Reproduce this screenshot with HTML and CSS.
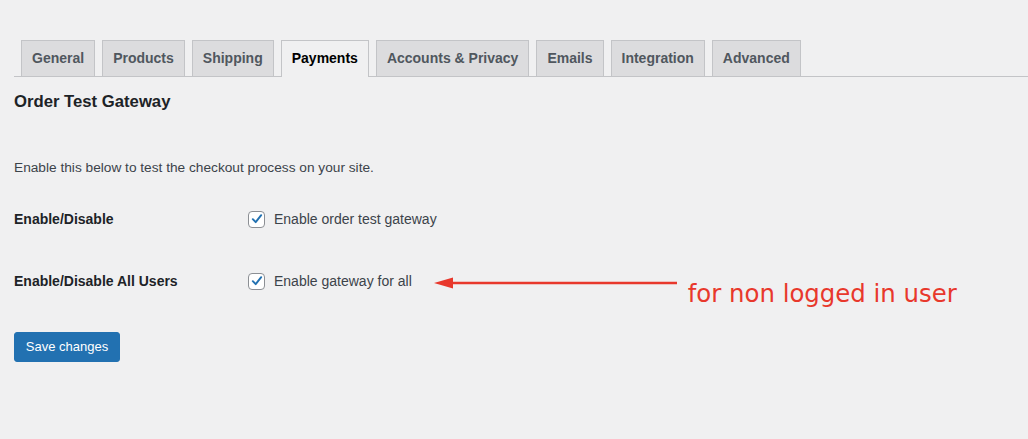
FILE: index.html
```html
<!DOCTYPE html>
<html>
<head>
<meta charset="utf-8">
<link rel="stylesheet" href="styles.css">
</head>
<body>
<div class="wrap">
  <nav class="tabs">
    <span class="tab">General</span>
    <span class="tab">Products</span>
    <span class="tab">Shipping</span>
    <span class="tab active">Payments</span>
    <span class="tab">Accounts &amp; Privacy</span>
    <span class="tab">Emails</span>
    <span class="tab">Integration</span>
    <span class="tab">Advanced</span>
  </nav>
  <h2 class="title">Order Test Gateway</h2>
  <p class="desc">Enable this below to test the checkout process on your site.</p>
  <div class="form">
    <div class="row">
      <div class="th">Enable/Disable</div>
      <label class="td"><span class="cb"><svg viewBox="0 0 16 16" width="16" height="16"><path d="M3.2 8.2 L6.5 11.6 L12.8 3.6" fill="none" stroke="#2271b1" stroke-width="2.2" stroke-linecap="round" stroke-linejoin="round"/></svg></span>Enable order test gateway</label>
    </div>
    <div class="row">
      <div class="th">Enable/Disable All Users</div>
      <label class="td"><span class="cb"><svg viewBox="0 0 16 16" width="16" height="16"><path d="M3.2 8.2 L6.5 11.6 L12.8 3.6" fill="none" stroke="#2271b1" stroke-width="2.2" stroke-linecap="round" stroke-linejoin="round"/></svg></span>Enable gateway for all</label>
      <div class="note">
        <svg class="arrow" width="246" height="12" viewBox="0 0 246 12"><path d="M18 4.8 H243 V7.2 H18 Z" fill="#e8382c"/><path d="M0 6 L19 0.5 L19 11.5 Z" fill="#e8382c"/></svg>
        <span class="note-text">for non logged in user</span>
      </div>
    </div>
  </div>
  <button class="save">Save changes</button>
</div>
</body>
</html>
```
FILE: styles.css
```css
html, body {
  margin: 0;
  padding: 0;
  background: #f0f0f1;
  height: 100%;
}
body {
  font-family: "Liberation Sans", Arial, sans-serif;
  color: #3c434a;
}
.wrap {
  padding: 40px 0 0 14px;
}
.tabs {
  display: flex;
  gap: 7px;
  padding-left: 7px;
  border-bottom: 1px solid #c3c4c7;
  height: 36px;
  align-items: flex-end;
}
.tab {
  box-sizing: border-box;
  height: 36px;
  padding: 0 10px;
  border: 1px solid #c3c4c7;
  border-bottom: none;
  background: #dcdcde;
  color: #50575e;
  font-size: 14px;
  font-weight: 600;
  line-height: 35px;
  white-space: nowrap;
}
.tab.active {
  background: #f0f0f1;
  color: #000;
  height: 37px;
  margin-bottom: -1px;
}
.title {
  margin: 15px 0 0;
  font-size: 16.7px;
  line-height: 20px;
  font-weight: 600;
  color: #1d2327;
}
.desc {
  margin: 47px 0 0;
  font-size: 13.7px;
  line-height: 18px;
  color: #3c434a;
}
.form {
  margin-top: 31px;
  display: flex;
  flex-direction: column;
  gap: 40px;
}
.row {
  display: flex;
  align-items: center;
  height: 22px;
}
.th {
  width: 234px;
  font-size: 14px;
  font-weight: 600;
  color: #1d2327;
}
.td {
  display: flex;
  align-items: center;
  font-size: 14px;
  color: #3c434a;
  white-space: nowrap;
}
.cb {
  box-sizing: border-box;
  width: 17px;
  height: 17px;
  border: 1px solid #8c8f94;
  border-radius: 4px;
  background: #fff;
  margin-right: 9px;
  display: flex;
  align-items: center;
  justify-content: center;
}
.cb svg {
  width: 14px;
  height: 14px;
}
.note {
  display: flex;
  align-items: flex-start;
  align-self: flex-start;
  margin-left: 22px;
  margin-top: 7px;
}
.note-text {
  margin-left: 8px;
  margin-top: 3px;
  font-family: "DejaVu Sans", Verdana, sans-serif;
  font-size: 24.4px;
  line-height: 28px;
  color: #e8382c;
  white-space: nowrap;
}
.save {
  margin-top: 40px;
  height: 30px;
  width: 106px;
  padding: 0;
  border: 1px solid #2271b1;
  border-radius: 3px;
  background: #2271b1;
  color: #fff;
  font-family: "Liberation Sans", Arial, sans-serif;
  font-size: 13px;
  line-height: 28px;
}
```
